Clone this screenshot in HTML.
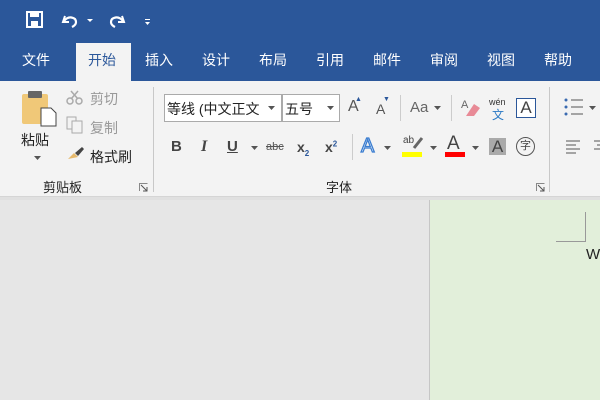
<!DOCTYPE html><html><head><meta charset="utf-8"><style>
*{margin:0;padding:0;box-sizing:border-box}
body{width:600px;height:400px;overflow:hidden;position:relative;font-family:"Liberation Sans","Noto Sans CJK SC",sans-serif;background:#e6e6e6}
.a{position:absolute}
.tab{position:absolute;top:50px;color:#fff;font-size:14px}
.t{position:absolute;font-size:14px;color:#222}
.g{color:#999}
</style></head><body>
<div class="a" style="left:0;top:0;width:600px;height:81px;background:#2b579a"></div>
<!-- QAT -->
<svg class="a" style="left:25px;top:10px" width="140" height="22">
<rect x="2" y="2" width="15" height="15" fill="none" stroke="#fff" stroke-width="2"/><rect x="5" y="2" width="9" height="5" fill="#fff"/><rect x="6" y="11" width="7" height="5" fill="#fff"/>
<path d="M40 6 L38 12 L44 12" fill="none" stroke="#fff" stroke-width="2"/><path d="M39 11 Q44 5 50 9 Q53 14 47 17" fill="none" stroke="#fff" stroke-width="2.2"/>
<path d="M62 9 l3 3 l3 -3z" fill="#fff"/>
<path d="M97 6 L99 12 L93 12" fill="none" stroke="#fff" stroke-width="2"/><path d="M98 11 Q93 5 87 9 Q84 14 90 17" fill="none" stroke="#fff" stroke-width="2.2"/>
<rect x="120" y="9" width="5" height="1" fill="#fff"/><path d="M120 12 l2.5 3 l2.5 -3z" fill="#fff"/>
</svg>
<div class="a" style="left:76px;top:43px;width:55px;height:38px;background:#f3f3f3"></div>
<div class="tab" style="left:22px">文件</div>
<div class="tab" style="left:88px;color:#2b579a">开始</div>
<div class="tab" style="left:145px">插入</div>
<div class="tab" style="left:202px">设计</div>
<div class="tab" style="left:259px">布局</div>
<div class="tab" style="left:316px">引用</div>
<div class="tab" style="left:373px">邮件</div>
<div class="tab" style="left:430px">审阅</div>
<div class="tab" style="left:487px">视图</div>
<div class="tab" style="left:544px">帮助</div>
<!-- ribbon -->
<div class="a" style="left:0;top:81px;width:600px;height:116px;background:#f3f3f3;border-bottom:1px solid #d5d5d5"></div>
<div class="a" style="left:0;top:197px;width:600px;height:3px;background:#e0e0e0"></div>
<div class="a" style="left:153px;top:87px;width:1px;height:105px;background:#c8c8c8"></div>
<div class="a" style="left:549px;top:87px;width:1px;height:105px;background:#c8c8c8"></div>
<!-- clipboard -->
<svg class="a" style="left:20px;top:88px" width="40" height="40">
<rect x="2" y="6" width="26" height="30" rx="2" fill="#f0c878"/><rect x="8" y="3" width="14" height="7" rx="1" fill="#666"/><path d="M21 20 h10 l5 5 v13 h-15z" fill="#fff" stroke="#444"/>
</svg>
<div class="t" style="left:21px;top:130px">粘贴</div>
<svg class="a" style="left:34px;top:156px" width="8" height="5"><path d="M0 0h7l-3.5 4z" fill="#555"/></svg>
<svg class="a" style="left:66px;top:88px" width="18" height="18"><circle cx="4" cy="13" r="3" fill="none" stroke="#aaa" stroke-width="1.5"/><circle cx="13" cy="13" r="3" fill="none" stroke="#aaa" stroke-width="1.5"/><path d="M5 3 L12 11 M12 3 L5 11" stroke="#aaa" stroke-width="1.5"/></svg>
<div class="t g" style="left:90px;top:89px">剪切</div>
<svg class="a" style="left:66px;top:116px" width="18" height="18"><rect x="1" y="1" width="9" height="12" fill="none" stroke="#aaa"/><rect x="6" y="5" width="10" height="12" fill="#f3f3f3" stroke="#aaa"/></svg>
<div class="t g" style="left:90px;top:118px">复制</div>
<svg class="a" style="left:66px;top:145px" width="20" height="16"><path d="M2 14 L8 8 L12 12 Z" fill="#e6b96c"/><path d="M9 8 L16 2 L18 4 L12 11z" fill="#444"/></svg>
<div class="t" style="left:90px;top:147px">格式刷</div>
<div class="t" style="left:43px;top:177px;font-size:13px">剪贴板</div>
<svg class="a" style="left:139px;top:183px" width="9" height="9"><path d="M0.5 8V0.5H8.5" fill="none" stroke="#888"/><path d="M2 2l6 6M8 4v4H4" fill="none" stroke="#555"/></svg>
<!-- font -->
<div class="a" style="left:164px;top:94px;width:118px;height:28px;background:#fff;border:1px solid #aaa"></div>
<div class="t" style="left:167px;top:99px">等线 (中文正文</div>
<svg class="a" style="left:268px;top:106px" width="8" height="5"><path d="M0 0h7l-3.5 4z" fill="#555"/></svg>
<div class="a" style="left:282px;top:94px;width:58px;height:28px;background:#fff;border:1px solid #aaa"></div>
<div class="t" style="left:285px;top:99px">五号</div>
<svg class="a" style="left:327px;top:106px" width="8" height="5"><path d="M0 0h7l-3.5 4z" fill="#555"/></svg>
<div class="t" style="left:348px;top:98px;font-size:16px;color:#555">A</div><div class="a" style="left:355px;top:96px;font-size:7px;color:#2b579a">▲</div>
<div class="t" style="left:376px;top:101px;font-size:14px;color:#555">A</div><div class="a" style="left:383px;top:96px;font-size:7px;color:#2b579a">▼</div>
<div class="a" style="left:400px;top:95px;width:1px;height:26px;background:#ccc"></div>
<div class="t" style="left:410px;top:99px;font-size:15px;color:#666">Aa</div>
<svg class="a" style="left:434px;top:106px" width="8" height="5"><path d="M0 0h7l-3.5 4z" fill="#555"/></svg>
<div class="a" style="left:451px;top:95px;width:1px;height:26px;background:#ccc"></div>
<svg class="a" style="left:460px;top:96px" width="22" height="22"><path d="M6 20 L14 8 L20 12 L14 20z" fill="#e88a96"/><text x="1" y="12" font-size="11" fill="#666" font-family="Liberation Sans">A</text></svg>
<div class="a" style="left:489px;top:97px;font-size:9px;color:#333">wén</div>
<div class="a" style="left:492px;top:106px;font-size:12px;color:#2b7ac5">文</div>
<div class="a" style="left:516px;top:98px;width:20px;height:20px;border:1px solid #2b579a;background:#fff;font-size:17px;line-height:18px;text-align:center;color:#444">A</div>
<div class="t" style="left:171px;top:138px;font-weight:bold;color:#444;font-size:15px">B</div>
<div class="t" style="left:201px;top:138px;font-style:italic;font-family:'Liberation Serif';font-weight:bold;font-size:16px;color:#444">I</div>
<div class="t" style="left:227px;top:138px;text-decoration:underline;font-weight:bold;color:#444;font-size:15px">U</div>
<svg class="a" style="left:251px;top:146px" width="8" height="5"><path d="M0 0h7l-3.5 4z" fill="#555"/></svg>
<div class="t" style="left:266px;top:141px;font-size:11px;text-decoration:line-through;color:#555">abc</div>
<div class="t" style="left:297px;top:139px;font-weight:bold;color:#444">x<sub style="font-size:8px;color:#2b579a">2</sub></div>
<div class="t" style="left:325px;top:139px;font-weight:bold;color:#444">x<sup style="font-size:8px;color:#2b579a">2</sup></div>
<div class="a" style="left:352px;top:134px;width:1px;height:26px;background:#ccc"></div>
<div class="t" style="left:361px;top:135px;font-size:20px;color:#fff;-webkit-text-stroke:1.3px #3a7dd0">A</div>
<svg class="a" style="left:384px;top:146px" width="8" height="5"><path d="M0 0h7l-3.5 4z" fill="#555"/></svg>
<div class="a" style="left:403px;top:135px;font-size:10px;color:#444">ab</div>
<svg class="a" style="left:412px;top:136px" width="12" height="14"><path d="M2 12 L10 2" stroke="#666" stroke-width="3"/></svg>
<div class="a" style="left:402px;top:152px;width:20px;height:5px;background:#ffff00"></div>
<svg class="a" style="left:430px;top:146px" width="8" height="5"><path d="M0 0h7l-3.5 4z" fill="#555"/></svg>
<div class="t" style="left:447px;top:133px;font-size:19px;color:#444">A</div>
<div class="a" style="left:445px;top:152px;width:20px;height:5px;background:#f00"></div>
<svg class="a" style="left:472px;top:146px" width="8" height="5"><path d="M0 0h7l-3.5 4z" fill="#555"/></svg>
<div class="a" style="left:489px;top:138px;width:17px;height:17px;background:#aaa;font-size:17px;line-height:17px;text-align:center;color:#444">A</div>
<div class="a" style="left:516px;top:137px;width:19px;height:19px;border:1.3px solid #555;border-radius:50%;font-size:11px;line-height:16px;text-align:center;color:#444">字</div>
<div class="t" style="left:326px;top:177px;font-size:13px">字体</div>
<svg class="a" style="left:536px;top:183px" width="9" height="9"><path d="M0.5 8V0.5H8.5" fill="none" stroke="#888"/><path d="M2 2l6 6M8 4v4H4" fill="none" stroke="#555"/></svg>
<svg class="a" style="left:563px;top:98px" width="37" height="20"><g fill="#3a6ab0"><circle cx="3" cy="2" r="1.5"/><circle cx="3" cy="9" r="1.5"/><circle cx="3" cy="16" r="1.5"/></g><g stroke="#555"><path d="M8 2h12M8 9h12M8 16h12"/></g><path d="M26 8h7l-3.5 4z" fill="#555"/></svg>
<svg class="a" style="left:566px;top:140px" width="34" height="14"><g stroke="#555"><path d="M0 1h14M0 5h10M0 9h14M0 13h10M28 1h6M31 5h3M28 9h6"/></g></svg>
<!-- doc -->
<div class="a" style="left:429px;top:200px;width:171px;height:200px;background:#e2efda;border-left:1px solid #c6c6c6"></div>
<div class="a" style="left:556px;top:212px;width:30px;height:30px;border-right:1px solid #999;border-bottom:1px solid #999"></div>
<div class="a" style="left:586px;top:246px;font-size:15px;color:#222">W</div>
</body></html>
